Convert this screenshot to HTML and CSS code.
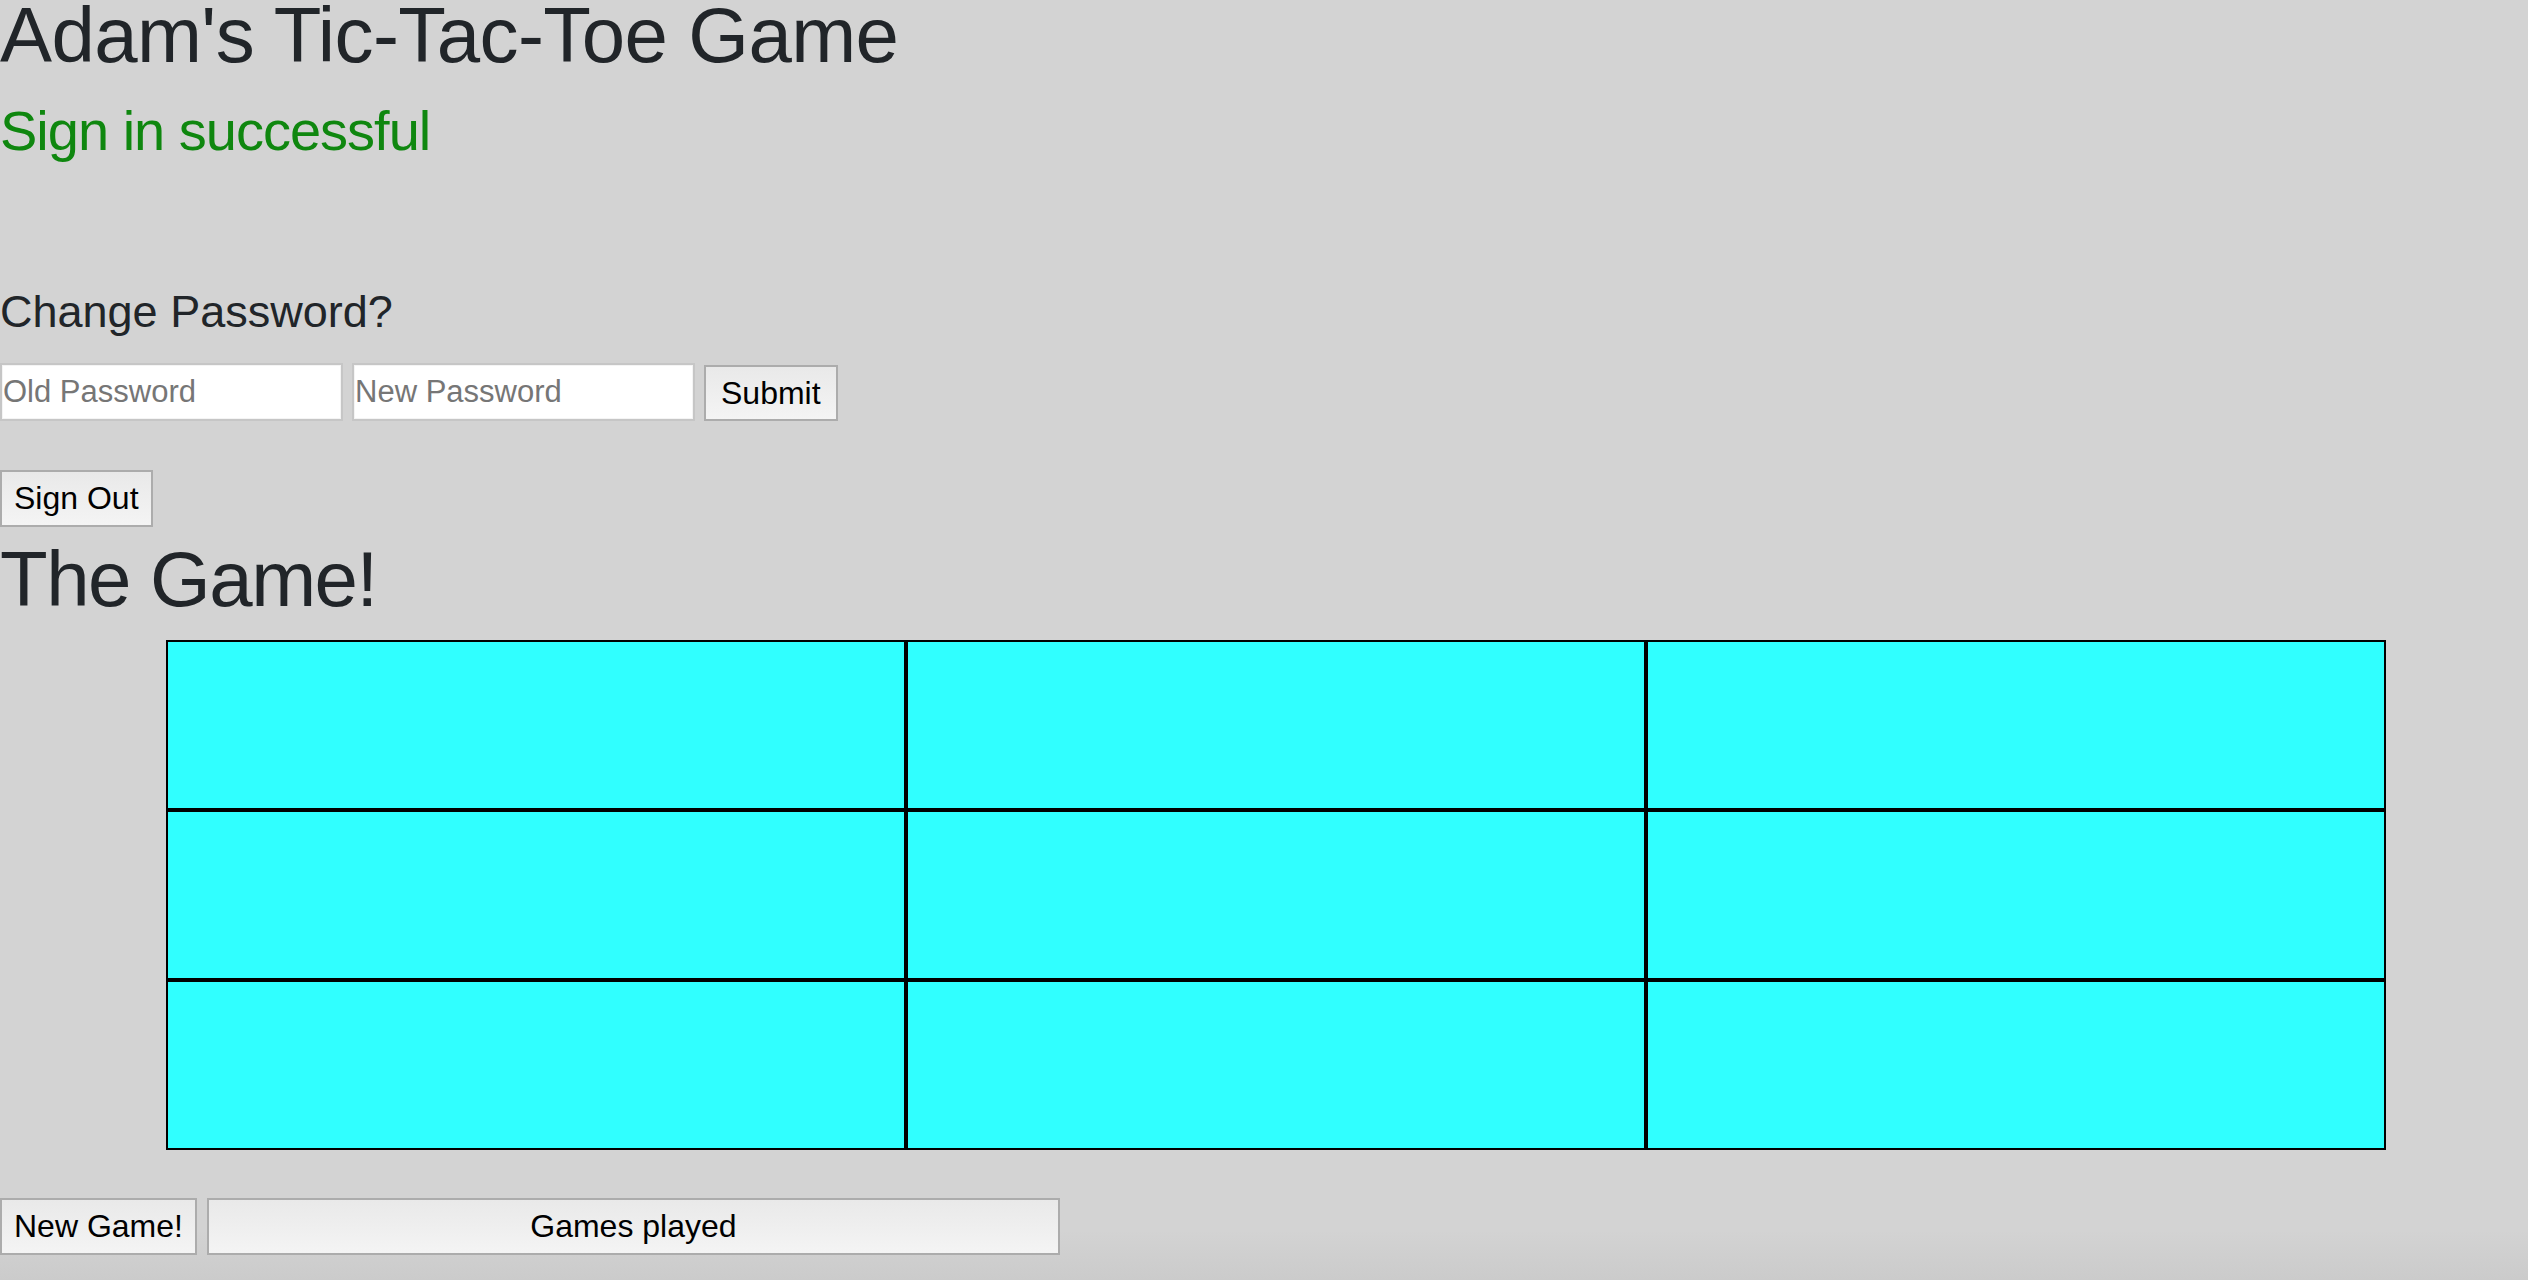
FILE: index.html
```html
<!DOCTYPE html>
<html lang="en">
<head>
<meta charset="utf-8">
<title>Adam's Tic-Tac-Toe Game</title>
<link rel="stylesheet" href="styles.css">
</head>
<body>
<main class="page">
  <h1 class="title">Adam's Tic-Tac-Toe Game</h1>
  <h3 class="status">Sign in successful</h3>

  <h4 class="change-heading">Change Password?</h4>
  <form class="pw-form">
    <input class="field" type="password" placeholder="Old Password">
    <input class="field" type="password" placeholder="New Password">
    <button class="btn btn-submit" type="button">Submit</button>
  </form>

  <div class="signout-row">
    <button class="btn" type="button">Sign Out</button>
  </div>

  <h1 class="game-title">The Game!</h1>

  <div class="board">
    <div class="cell"></div><div class="cell"></div><div class="cell"></div>
    <div class="cell"></div><div class="cell"></div><div class="cell"></div>
    <div class="cell"></div><div class="cell"></div><div class="cell"></div>
  </div>

  <div class="controls">
    <button class="btn" type="button">New Game!</button>
    <button class="btn btn-wide" type="button">Games played</button>
  </div>
</main>
</body>
</html>
```

FILE: styles.css
```css
html, body {
  margin: 0;
  padding: 0;
}

body {
  background: linear-gradient(to bottom, #d3d3d3 0, #d3d3d3 1230px, #cbcbcb 1280px);
  min-height: 1280px;
  font-family: "Liberation Sans", Arial, sans-serif;
  color: #212529;
  overflow: hidden;
}

.page {
  display: flex;
  flex-direction: column;
  align-items: flex-start;
}

.title,
.game-title {
  font-size: 78px;
  font-weight: 400;
  margin: 0;
}

.title {
  line-height: 70px;
  letter-spacing: -0.6px;
}

.game-title {
  line-height: 78px;
  letter-spacing: -1.5px;
  margin-top: 13px;
}

.status {
  font-size: 56px;
  line-height: 56px;
  font-weight: 400;
  letter-spacing: -1px;
  color: #0f870f;
  margin: 33px 0 0;
}

.change-heading {
  font-size: 45px;
  line-height: 45px;
  font-weight: 400;
  margin: 130px 0 0;
}

.pw-form {
  display: flex;
  align-items: flex-end;
  gap: 9px;
  margin: 29px 0 0;
}

.field {
  box-sizing: border-box;
  width: 343px;
  height: 58px;
  padding: 0 1px;
  border: 2px solid #c6c6c6;
  box-shadow: inset 0 0 0 1px #f4f4f4;
  background: #fff;
  font-family: "Liberation Sans", Arial, sans-serif;
  font-size: 31px;
  color: #212529;
  outline: none;
}

.field::placeholder {
  color: #767676;
}

.btn {
  box-sizing: border-box;
  height: 57px;
  padding: 0 12px;
  border: 2px solid #acacac;
  border-radius: 0;
  background: linear-gradient(to bottom, #e9e9e9, #f4f4f4);
  font-family: "Liberation Sans", Arial, sans-serif;
  font-size: 32px;
  color: #000;
  cursor: pointer;
}

.btn-submit {
  height: 56px;
  padding: 0 15px;
}

.signout-row {
  margin-top: 49px;
}

.board {
  display: grid;
  grid-template-columns: repeat(3, 740px);
  grid-auto-rows: 170px;
  margin: 22px 0 0 166px;
}

.cell {
  box-sizing: border-box;
  border: 2px solid #000;
  background: #30ffff;
}

.controls {
  display: flex;
  gap: 10px;
  margin-top: 48px;
}

.btn-wide {
  width: 853px;
}
```
